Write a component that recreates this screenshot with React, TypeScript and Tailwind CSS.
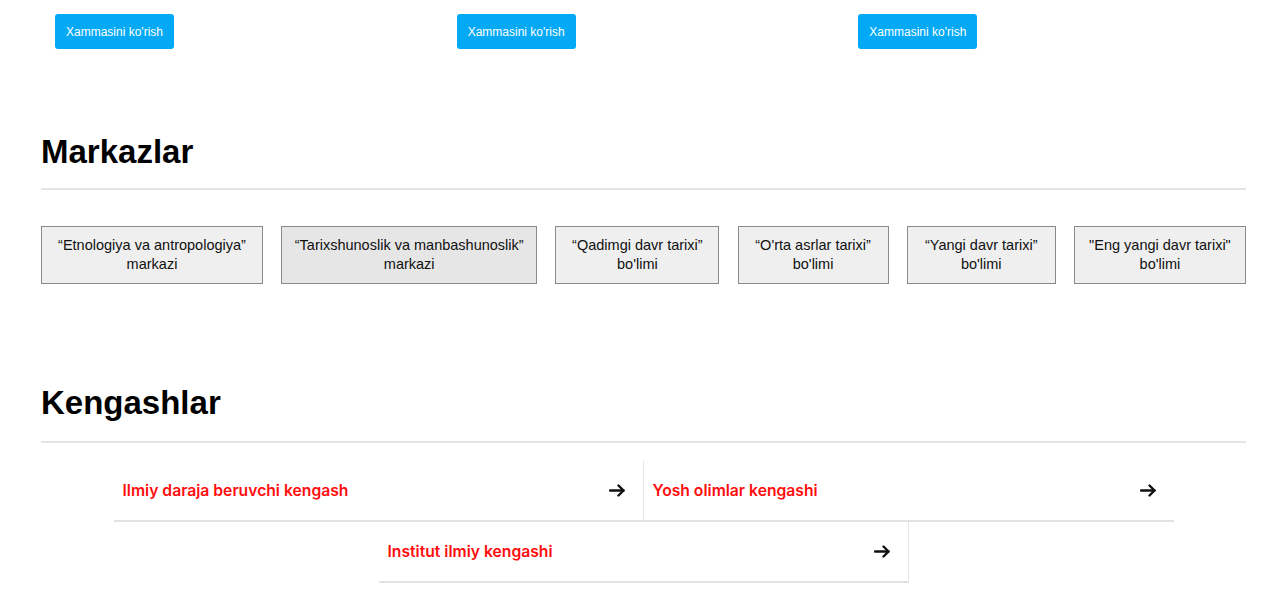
import React from "react";

const boxes: [string, string, string][] = [
  ["“Etnologiya va antropologiya”", "markazi", "w-[222px]"],
  ["“Tarixshunoslik va manbashunoslik”", "markazi", "w-[256px]"],
  ["“Qadimgi davr tarixi”", "bo'limi", "w-[164px]"],
  ["“O'rta asrlar tarixi”", "bo'limi", "w-[151px]"],
  ["“Yangi davr tarixi”", "bo'limi", "w-[149px]"],
  ['"Eng yangi davr tarixi"', "bo'limi", "w-[172px]"],
];

const councils: [string, string][] = [
  ["Ilmiy daraja beruvchi kengash", "border-r"],
  ["Yosh olimlar kengashi", ""],
  ["Institut ilmiy kengashi", "border-r"],
];

function Arrow() {
  return (
    <svg width="16" height="13" viewBox="0 0 16 13" fill="none" className="shrink-0">
      <path d="M1 6.5H14.5" stroke="#111" strokeWidth="2.4" strokeLinecap="round" />
      <path d="M9.5 1.5L14.5 6.5L9.5 11.5" stroke="#111" strokeWidth="2.4" strokeLinecap="round" strokeLinejoin="round" />
    </svg>
  );
}

export default function App() {
  return (
    <div className="min-h-[595px] bg-white font-['Liberation_Sans',Arial,sans-serif] text-black">
      <div className="ml-[41px] w-[1205px]">
        <div className="grid grid-cols-3 pt-[14px]">
          {[0, 1, 2].map((i) => (
            <div key={i} className="px-[14px]">
              <button className="h-[35px] w-[119px] rounded-[3px] bg-[#03a9f4] text-[12px] text-white">
                Xammasini ko'rish
              </button>
            </div>
          ))}
        </div>

        <h2 className="mt-[84px] text-[33px] font-bold leading-[37px]">Markazlar</h2>
        <div className="mt-[18px] h-[2px] bg-[#e4e4e4]" />

        <div className="mt-[36px] flex justify-between">
          {boxes.map(([a, b, w], i) => (
            <div
              key={i}
              className={`flex h-[58px] flex-col items-center justify-center border border-[#8a8a8a] text-center text-[14.5px] leading-[19px] text-[#111] ${w} ${
                i === 1 ? "bg-[#e6e6e6]" : "bg-[#efefef]"
              }`}
            >
              <span className="whitespace-nowrap">{a}</span>
              <span className="whitespace-nowrap">{b}</span>
            </div>
          ))}
        </div>

        <h2 className="mt-[100px] text-[33px] font-bold leading-[37px]">Kengashlar</h2>
        <div className="mt-[20px] h-[2px] bg-[#e4e4e4]" />

        <div className="mx-auto mt-[18px] flex w-[1060px] flex-wrap justify-center">
          {councils.map(([c, br]) => (
            <div
              key={c}
              className={`flex h-[61px] w-[530px] items-center justify-between border-b-2 border-b-[#e2e2e2] border-r-[#e6e6e6] pl-[9px] pr-[18px] ${br}`}
            >
              <span className="font-['Inter',sans-serif] text-[15.7px] font-semibold text-[#ff0d0d]">{c}</span>
              <Arrow />
            </div>
          ))}
        </div>
      </div>
    </div>
  );
}
